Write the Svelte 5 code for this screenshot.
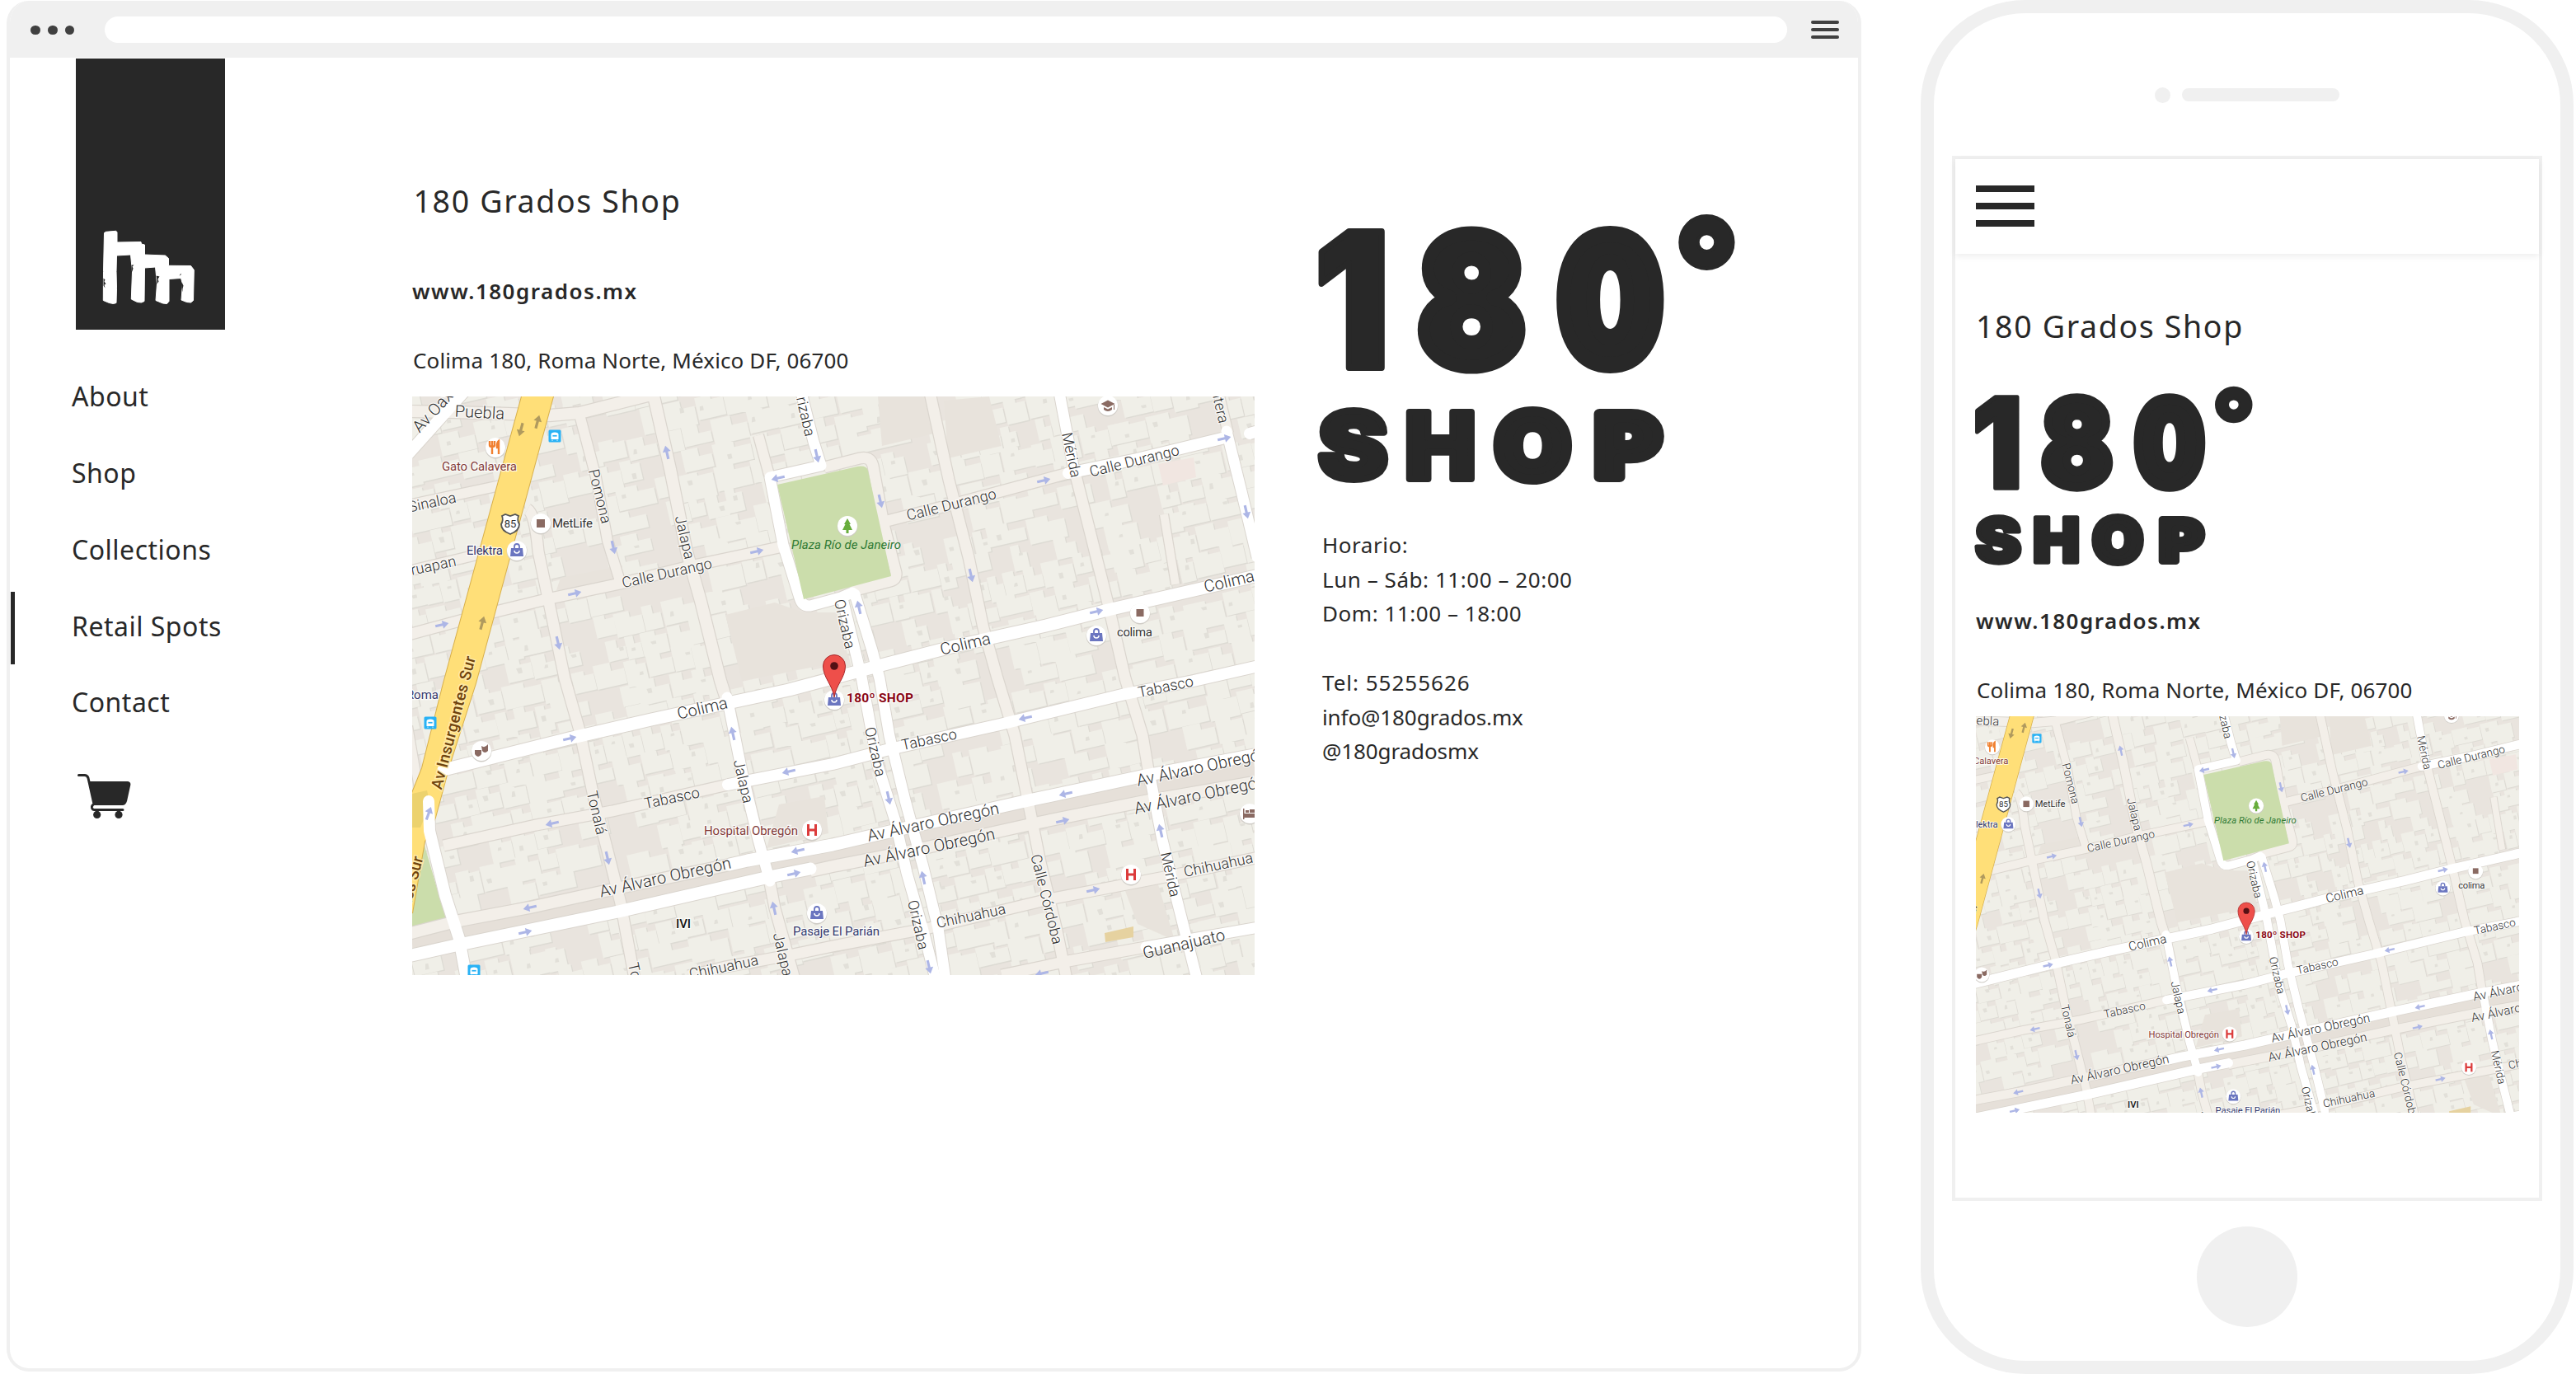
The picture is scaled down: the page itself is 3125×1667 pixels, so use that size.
<script>
  const nav = ['About', 'Shop', 'Collections', 'Retail Spots', 'Contact'];
  const active = 'Retail Spots';

  // Wordmark glyphs: target box [x0, x1, y0, y1] and the ink box of the face, in em.
  const wordmark = [
    { ch: '1', box: [1597, 1680, 277, 449.5], ink: [0.031, 0.406, 0.727, 0], s: 8 },
    { ch: '8', box: [1720, 1852, 274, 453.5], ink: [0.035, 0.652, 0.738, -0.011], s: 17 },
    { ch: '0', box: [1888.5, 2020, 274, 453.5], ink: [0.035, 0.685, 0.738, -0.011], s: 20 },
    { ch: '°', box: [2034.5, 2104.5, 258.5, 327.5], ink: [0.04, 0.413, 0.745, 0.372], s: 4 },
    { ch: 'S', box: [1598, 1684, 494.5, 586.5], ink: [0.025, 0.635, 0.738, -0.011], s: 8 },
    { ch: 'H', box: [1706, 1788.5, 496, 585], ink: [0.05, 0.7, 0.727, 0], s: 8 },
    { ch: 'O', box: [1811.5, 1907.5, 493, 588.5], ink: [0.035, 0.745, 0.738, -0.011], s: 12 },
    { ch: 'P', box: [1934, 2020, 496, 585], ink: [0.05, 0.64, 0.727, 0], s: 12 }
  ].map(({ ch, box, ink, s }) => {
    const [x0, x1, y0, y1] = box;
    const [l, r, t, b] = ink;
    const size = (y1 - y0 - s) / (t - b);
    const sx = (x1 - x0) / ((r - l) * size + s);
    const x = x0 + (s / 2 - l * size) * sx;
    const y = y1 - s / 2 + b * size;
    return { ch, size, s, m: `translate(${x.toFixed(2)} ${y.toFixed(2)}) scale(${sx.toFixed(4)} 1)` };
  });

  // Buildings on a grid turned by the street angle.
  let seed = 11;
  const rnd = () => ((seed = (seed * 16807) % 2147483647) / 2147483647);
  let houses = '';
  let yards = '';
  for (let gy = -40; gy < 980; gy += 29) {
    for (let gx = -220; gx < 1060; ) {
      const w = 18 + rnd() * 34;
      if (rnd() > 0.14) {
        const y = gy + rnd() * 6;
        const h = 24 + rnd() * 9;
        const n = 3 + rnd() * 9;
        const x = gx + rnd() * 2;
        houses += `M${x.toFixed(1)} ${y.toFixed(1)}h${(w * 0.55).toFixed(1)}v${n.toFixed(1)}h${(w * 0.42).toFixed(1)}v${(h - n).toFixed(1)}h${(-w * 0.97).toFixed(1)}z`;
        if (rnd() > 0.5) yards += `M${(x + 4 + rnd() * w * 0.5).toFixed(1)} ${(y + 7 + rnd() * 10).toFixed(1)}h${(3 + rnd() * 4).toFixed(1)}v${(3 + rnd() * 4).toFixed(1)}h-5z`;
      }
      gx += w;
    }
  }

  const minor = [
    [14, 'M-5 18L50 19 117 21 167 23 203 20 290-2'],
    [12, 'M-5 132L107 108'],
    [12, 'M-5 212L83 191'],
    [13, 'M-5 289L73 268 163 246 257 226 337 206 450 182'],
    [13, 'M572 152L655 131 796 93'],
    [12, 'M203 22L223 98 237 175 252 224'],
    [13, 'M140 137Q149 142 153 188L167 255 185 342 203 405 220 485 237 551 253 615 270 707'],
    [14, 'M292-5L313 88 333 188 350 248 374 345 382 370'],
    [13, 'M432 580L440 621 464 707'],
    [12, 'M420 47L433 95'],
    [13, 'M500 86L543 75Q556 72 559 84L572 155 587 214Q588 222 580 224L534 236'],
    [13, 'M628-5L651 101 675 195 693 281 710 342 731 411 748 495 762 565 782 648 794 707'],
    [13, 'M803 88L820 155 844 251 865 342 886 411 896 471'],
    [12, 'M978-5L990 45'],
    [13, 'M38 545L150 520 243 503 383 471'],
    [14, 'M-5 652L57 636 143 620 257 595 390 567'],
    [14, 'M483 576L510 570 607 551 755 518 889 491 1027 467'],
    [13, 'M335 703L380 692 457 678 510 667 627 645 772 610 913 583 1027 559'],
    [13, 'M715 702L796 685 890 668'],
    [10, 'M912 143L926 228'],
    [10, 'M-5 400L8 475']
  ];
  const major = [
    [14, 'M-5 70L64-7'],
    [15, 'M38 453L90 440 190 415 290 392 457 356 569 326 658 303 769 278 844 259 927 240 1027 217'],
    [14, 'M383 471L510 446 579 428 713 398 865 361 948 345 1027 327'],
    [15, 'M385 568L407 563 510 544 579 528 748 490 889 460 1027 434'],
    [15, 'M-5 679L57 665 250 625 433 583 483 573'],
    [14, 'M796 93L879 76 982 51M1016 45L1027 42'],
    [13, 'M785-5L803 90'],
    [13, 'M896 466L910 538 927 608 952 707'],
    [13, 'M988 42L1006 115 1025 195'],
    [13, 'M890 668L930 661 1027 644'],
    [13, 'M382 365L400 455 420 538 434 588'],
    [13, 'M472-5L487 55 496 84 434 98 450 180 470 244Q473 255 483 254L520 244 534 238'],
    [13, 'M522 245L545 340 565 448 586 515 600 578 620 648 635 707'],
    [13, 'M537 240L558 308 567 342 579 412 598 490 620 571 638 645 647 707'],
    [14, 'M20 491L21 527 40 605 57 658 66 707']
  ];

  const E = -13, W = 167, N = -103, S = 77;
  const arrows = [
    [197, 239, E], [418, 188, E], [36, 277, E], [309, 68, N], [244, 183, S], [177, 299, S], [491, 72, S], [444, 99, W],
    [766, 102, E], [985, 51, E], [1012, 140, S], [568, 127, S], [678, 217, S], [830, 261, E], [542, 256, N],
    [191, 415, E], [389, 409, N], [457, 455, W], [170, 518, W], [237, 560, S], [468, 551, W], [463, 579, E],
    [143, 620, W], [137, 650, E], [439, 621, N], [20, 506, -70],
    [744, 390, W], [578, 487, S], [793, 482, W], [789, 515, E], [620, 584, N], [826, 599, E], [908, 527, N], [627, 692, S], [764, 700, W]
  ];
  const avenueArrows = [[132, 40, 105], [152, 31, -75], [85, 275, -75]];

  // Street names: text, x, y, angle, size, anchor
  const streets = [
    ['Av Oaxaca', 4, 40, -47, 20, 'start'], ['Puebla', 82, 19, 3, 20],
    ['Sinaloa', 53, 122, -12, 18, 'end'], ['Uruapan', 53, 199, -12, 18, 'end'],
    ['Pomona', 228, 121, 76, 18], ['Jalapa', 331, 171, 77, 18], ['Calle Durango', 309, 214, -12.5, 18],
    ['Orizaba', 483, 48, 77, 18, 'end'], ['Frontera', 985, 32, 77, 18, 'end'], ['Mérida', 800, 71, 78, 18],
    ['Calle Durango', 654, 131, -14, 18], ['Calle Durango', 876, 78, -14, 18],
    ['Colima', 671, 300, -13, 20], ['Colima', 991, 224, -13, 20], ['Colima', 352, 378, -13, 20],
    ['Orizaba', 525, 276, 77, 18], ['Orizaba', 562, 431, 77, 18], ['Orizaba', 614, 641, 77, 18],
    ['Tabasco', 315, 487, -12, 18], ['Tabasco', 627, 416, -12, 18], ['Tabasco', 914, 352, -12, 18],
    ['Tonalá', 224, 505, 77, 18], ['Jalapa', 402, 467, 77, 18], ['Jalapa', 450, 677, 77, 18],
    ['Tonalá', 268, 687, 77, 18, 'start'],
    ['Av Álvaro Obregón', 307, 583, -12.5, 20], ['Av Álvaro Obregón', 632, 516, -12, 20], ['Av Álvaro Obregón', 627, 547, -12, 20],
    ['Av Álvaro Obregón', 879, 466, -12, 20, 'start'], ['Av Álvaro Obregón', 876, 500, -12, 20, 'start'],
    ['Chihuahua', 378, 692, -12, 18], ['Chihuahua', 678, 630, -12, 18], ['Chihuahua', 978, 568, -12, 18],
    ['Calle Córdoba', 770, 610, 76, 18], ['Mérida', 920, 580, 77, 18], ['Guanajuato', 936, 664, -13, 20]
  ];
  const dots = [[101, 62], [156, 154], [127, 187], [844, 11], [528, 157], [883, 263], [830, 290], [84, 430], [485, 526], [491, 627], [872, 580], [1016, 506], [512, 368]];
  const bags = [[127, 187], [830, 290], [491, 627], [512, 368]];
  const buses = [[173, 48], [22, 396], [75, 697]];
</script>

{#snippet shopLogo()}
  <svg class="wordmark" viewBox="1595 255 515 335" role="img" aria-label="180° Shop">
    {#each wordmark as g}
      <text transform={g.m} font-size={g.size} stroke-width={g.s}>{g.ch}</text>
    {/each}
  </svg>
{/snippet}

{#snippet cityMap(view)}
  <svg class="map" viewBox={view} preserveAspectRatio="none">
    <rect class="ground" width="1022" height="702" />
    <g transform="rotate(-13)">
      <path class="shade" d={houses} transform="translate(1.3 1.5)" />
      <path class="house" d={houses} />
      <path class="yard" d={yards} />
    </g>
    <path class="open" d="M380 265L440 250 475 262 515 262 530 320 400 345Z M175 235L250 228 255 205 180 220Z M565 0L625 0 633 45 570 60Z M645 5L700 0 715 60 650 75Z M445 495L500 485 505 530 430 548Z M865 600L905 592 925 660 880 640Z" />
    <path class="plaza" d="M905 82L948 74 951 98 911 108Z" />
    <path class="gold" d="M840 651L875 643 875 656 841 662Z" />
    <path class="green" d="M15 545L42 637 0 645 0 600Z" />
    <path class="median" d="M0 664L57 650 250 610 420 574 600 540 755 504 889 475 1022 450" />
    {#each minor as [w, d]}<path class="edge" {d} stroke-width={w + 2.4} />{/each}
    {#each major as [w, d]}<path class="edge" {d} stroke-width={w + 2} />{/each}
    {#each minor as [w, d]}<path class="minor" {d} stroke-width={w} />{/each}
    <path class="avenue-edge" d="M133 0L171 0 77 348 45 448 28 511 15 540 0 627M133 0L38 348 12 451 0 481" />
    <path class="avenue" d="M133 0L171 0 77 348 45 448 28 511 15 540 0 627 0 481 12 451 38 348Z" />
    <path class="avenue-dark" d="M0 482L18 478 22 495 10 523 0 523Z" />
    {#each major as [w, d]}<path class="major" {d} stroke-width={w} />{/each}
    <path class="green" d="M443 107L540 85Q551 83 553 90L581 218 475 246Z" />
    {#each arrows as [x, y, a]}
      <path class="arrow" d="M-8-1.600H1V-5L8.500 0L1 5V1.600H-8Z" transform="translate({x} {y}) rotate({a})" />
    {/each}
    {#each avenueArrows as [x, y, a]}
      <path class="arrow tan" d="M-8-1.600H1V-5L8.500 0L1 5V1.600H-8Z" transform="translate({x} {y}) rotate({a})" />
    {/each}
    {#each streets as [name, x, y, a, size, anchor]}
      <text class="street" dy=".35em" font-size={size} text-anchor={anchor ?? 'middle'} transform="translate({x} {y}) rotate({a})">{name}</text>
    {/each}
    <text class="avenue-name" dy=".35em" textLength="166" transform="translate(29 476) rotate(-75.5)">Av Insurgentes Sur</text>
    <text class="avenue-name" dy=".35em" text-anchor="end" transform="translate(7 558) rotate(-75.5)">Av Insurgentes Sur</text>

    {#each dots as [x, y]}
      <circle class="halo" cx={x} cy={y + 1} r="12.400" />
      <circle class="dot" cx={x} cy={y} r="12" />
    {/each}
    {#each bags as [x, y]}
      <g transform="translate({x} {y})">
        <path class="bag" d="M-7-3H7L8 7H-8Z" />
        <path class="bag-handle" d="M-3-3V-5A3 3 0 0 1 3-5V-3" />
        <path class="bag-smile" d="M-3 0A3 3 0 0 0 3 0" />
      </g>
    {/each}
    {#each buses as [x, y]}
      <g transform="translate({x} {y})">
        <rect class="bus" x="-7.500" y="-7.500" width="15" height="15" rx="1.500" />
        <path class="bus-body" d="M-4.500 4V-2Q-4.500-4.500 0-4.500T4.500-2V4Z" />
        <path class="bus-glass" d="M-3-1.500H3V1H-3ZM-3 4.500V6M3 4.500V6" />
      </g>
    {/each}
    <path class="fork" d="M97 54V70M94 54V59Q94 61 97 61T100 59V54M105 70V54Q102.500 56 103 62H105" />
    <rect class="brown" x="151" y="149" width="10" height="10" />
    <rect class="brown" x="878.500" y="258" width="9" height="9" />
    <path class="shield" d="M109 145L113 143 119 145 125 143 129 145Q127 150 130 155 130 163 119 167 108 163 108 155 111 150 109 145Z" />
    <text class="poi shield-no" x="119" y="158.500" text-anchor="middle" font-size="12.500">85</text>
    <path class="brown" d="M835.500 9L844 4.500 852.500 9 844 13.500ZM839 13V16Q844 20 849 16V13L844 15.500ZM851 10H852V16H851Z" />
    <path class="tree" d="M528 148L532 155H530.500L534 162H529.500V166H526.500V162H522L525.500 155H524Z" />
    <path class="brown" d="M76 429H84V434Q80 440 76 434ZM84 424Q88 427 92 422V430Q88 434 85 430Z" />
    <path class="brown" d="M1008 500H1009.500V506H1022V511H1009.500V513H1008ZM1011 502H1015V505H1011ZM1016 501H1022V505H1016Z" />
    <path class="cross" d="M480.500 519V533M489.500 519V533M480.500 526H489.500M867.500 573V587M876.500 573V587M867.500 580H876.500" />

    <text class="poi food" x="36" y="90" textLength="91">Gato Calavera</text>
    <text class="poi" x="170" y="159" textLength="49">MetLife</text>
    <text class="poi navy" x="66" y="192" textLength="44">Elektra</text>
    <text class="poi navy" x="32" y="367" text-anchor="end">Roma</text>
    <text class="poi park" x="460" y="185" textLength="133">Plaza Río de Janeiro</text>
    <text class="poi" x="855" y="291" textLength="43">colima</text>
    <text class="poi food" x="354" y="532" textLength="114">Hospital Obregón</text>
    <text class="poi black" x="329" y="645" text-anchor="middle">IVI</text>
    <text class="poi navy" x="462" y="654" textLength="105">Pasaje El Parián</text>
    <text class="poi spot" x="527" y="371" textLength="81">180º SHOP</text>

    <path class="pin" d="M512 365C510 350 498.500 341 498.500 327A13.500 13.500 0 0 1 525.500 327C525.500 341 514 350 512 365Z" />
    <circle class="pin-eye" cx="512" cy="327" r="4.800" />
  </svg>
{/snippet}

<div class="stage">
  <section class="browser">
    <header class="bar">
      <div class="dots"><i></i><i></i><i></i></div>
      <div class="address"></div>
      <div class="burger small"><i></i><i></i><i></i></div>
    </header>
    <div class="page">
      <aside>
        <svg class="brand" viewBox="91.500 71.500 181 329" role="img" aria-label="hm">
          <rect x="91.500" y="71.500" width="181" height="329" fill="#282828" />
          <path
            fill="#fff" stroke="#fff" stroke-width="1" stroke-linejoin="round"
            d="M126 283L128 281.800 140 280.800 141.500 282V294.500L170.500 294 171 296.500 175 297.500V309.500L200 310.500 204 314V322.800L231 323 234.800 328 234 365 231 367.500 226 367 219.500 364.500 221 345 219 338 204.500 339V366L202 369 197 368.500 188.500 365 190 345 188 324.500 175 325.500 174.500 366 171 367.500 166 367 158.800 363.500 160 330 158 309.500 141 310.500 140.500 330 141 350 140.500 368 137 369 132 368 124.800 365 125 330Z" />
          <path fill="#282828" d="M125 338l2 2-1 2 2 3-2 1 1 4-2-3zM159 322l3 0-2 2 1 2-1 4-1-3zM189 335l4 1-2 3 1 3-2 3 0-4zM219 332l-2 3 2-1zM220 343l2 4-1 4 0 4-1-5z" />
        </svg>
        <ul>
          {#each nav as item}
            <li class:active={item === active}><span>{item}</span></li>
          {/each}
        </ul>
        <svg class="cart" viewBox="93 939 67 57">
          <path fill="none" stroke="#282828" stroke-width="3" stroke-linecap="round" stroke-linejoin="round" d="M95.500 941.500H102.500Q106 941.500 107 945L114 976.500Q111 978 111.500 981 112 983.500 114.500 983.500H149" />
          <path fill="#282828" d="M107.500 949H155Q159 949.500 158.300 953.500L154 973Q152.500 978 148.500 978H114Z" />
          <circle fill="#282828" cx="117.700" cy="989.400" r="4.600" />
          <circle fill="#282828" cx="144" cy="989.400" r="4.600" />
        </svg>
      </aside>
      <main>
        <h1>180 Grados Shop</h1>
        <p class="site">www.180grados.mx</p>
        <p class="place">Colima 180, Roma Norte, México DF, 06700</p>
        <div class="map-box">{@render cityMap('0 0 1022 702')}</div>
      </main>
      <div class="info">
        {@render shopLogo()}
        <div class="lines">
          <p>Horario:</p>
          <p>Lun – Sáb: 11:00 – 20:00</p>
          <p>Dom: 11:00 – 18:00</p>
          <p class="gap">Tel: 55255626</p>
          <p class="tight">info@180grados.mx</p>
          <p class="tight">@180gradosmx</p>
        </div>
      </div>
    </div>
  </section>

  <section class="phone">
    <div class="speaker"><i></i><b></b></div>
    <div class="screen">
      <div class="top"><div class="burger large"><i></i><i></i><i></i></div></div>
      <div class="body">
        <h1>180 Grados Shop</h1>
        {@render shopLogo()}
        <p class="site">www.180grados.mx</p>
        <p class="place">Colima 180, Roma Norte, México DF, 06700</p>
        <div class="map-box">{@render cityMap('74.400 12.300 879 641')}</div>
      </div>
    </div>
    <div class="home"></div>
  </section>
</div>

<style>
  :global(body) { background: #fff; overflow: hidden; }
  .stage {
    display: flex;
    align-items: flex-start;
    width: 3125px;
    height: 1667px;
    overflow: hidden;
    color: #282828;
    font-family: 'Noto Sans', 'Open Sans', sans-serif;
  }
  h1, p, ul { margin: 0; padding: 0; font-weight: 400; }
  p, h1, li { white-space: nowrap; }

  .browser {
    box-sizing: border-box;
    flex: none;
    width: 2250px;
    height: 1663px;
    margin: 1px 0 0 8px;
    border: 4px solid #f0f0f0;
    border-top: 0;
    border-radius: 27px;
    overflow: hidden;
    display: flex;
    flex-direction: column;
  }
  .bar {
    flex: none;
    height: 69px;
    display: flex;
    align-items: center;
    background: #f0f0f0;
  }
  .dots { display: flex; gap: 9px; margin-left: 25px; padding-top: 2px; }
  .dots i { width: 11.8px; height: 11.8px; border-radius: 50%; background: #404040; }
  .address { width: 2041px; height: 32px; margin-left: 37px; border-radius: 16px; background: #fff; }
  .burger { display: flex; flex-direction: column; }
  .burger i { display: block; background: #404040; }
  .small { gap: 4.5px; width: 33.5px; margin-left: 29px; padding-top: 1px; }
  .small i { height: 4.5px; border-radius: 2px; }

  .page { display: flex; flex: 1; }
  aside { width: 488px; padding-top: 1px; box-sizing: border-box; }
  .brand { display: block; width: 181px; height: 329px; margin-left: 79.5px; }
  ul { list-style: none; margin-top: 37px; }
  li {
    display: flex;
    align-items: center;
    height: 92.75px;
    font-size: 32px;
    line-height: 44px;
    letter-spacing: 0.5px;
  }
  li::before { content: ''; width: 5px; height: 88px; margin: 0 69px 0 1px; }
  li.active::before { background: #282828; }
  li span { padding-bottom: 4px; }
  .cart { display: block; width: 67px; height: 57px; margin: 37px 0 0 81px; }

  main { width: 1022px; padding-top: 144px; }
  h1 { padding-left: 1.5px; font-size: 37.5px; line-height: 60px; letter-spacing: 1.65px; }
  .site { font-size: 26px; line-height: 40px; font-weight: 600; letter-spacing: 1.5px; }
  .place { padding-left: 1px; font-size: 26px; line-height: 40px; letter-spacing: 0.13px; }
  main .site { margin-top: 59px; }
  main .place { margin-top: 44px; }
  main .map-box { width: 1022px; height: 702px; margin-top: 24px; }

  .info { margin-left: 73px; padding-top: 185px; }
  .info .wordmark { width: 515px; height: 335px; }
  .lines { margin: 51px 0 0 9px; font-size: 26px; line-height: 41.7px; letter-spacing: 0.55px; }
  .gap { margin-top: 41.7px; letter-spacing: 1px; }
  .tight { letter-spacing: -0.1px; }

  .wordmark { display: block; fill: #282828; stroke: #282828; stroke-linejoin: round; font-family: Inter, sans-serif; font-weight: 900; }

  .phone {
    box-sizing: border-box;
    flex: none;
    width: 792px;
    height: 1667px;
    margin-left: 72px;
    border: 16px solid #f0f0f0;
    border-radius: 127px;
    display: flex;
    flex-direction: column;
    align-items: center;
  }
  .speaker { display: flex; align-items: center; gap: 13.5px; margin-top: 89.5px; width: 224px; }
  .speaker i { width: 19px; height: 19px; border-radius: 50%; background: #f0f0f0; }
  .speaker b { width: 191px; height: 16px; border-radius: 8px; background: #f0f0f0; }
  .screen { box-sizing: border-box; width: 716px; height: 1268px; margin-top: 64px; border: 4.5px solid #f0f0f0; }
  .top { height: 115px; display: flex; align-items: center; box-shadow: 0 3px 8px rgba(0, 0, 0, 0.07); }
  .large { width: 70.5px; gap: 13px; margin-left: 25px; }
  .large i { height: 8px; background: #282828; }
  .body { padding: 58px 0 0 25px; }
  .body h1 { padding-left: 0; }
  .body .wordmark { width: 343.3px; height: 223.3px; margin: 39.5px 0 0 -4.5px; }
  .body .site { margin-top: 45px; }
  .body .place { margin-top: 44px; }
  .body .map-box { width: 659px; height: 481px; margin-top: 11.4px; }
  .home { width: 122px; height: 122px; margin-top: 31.5px; border-radius: 50%; background: #f0f0f0; }

  .map { display: block; width: 100%; height: 100%; overflow: hidden; font-family: Roboto, sans-serif; }
  .ground { fill: #e9e4de; }
  .house { fill: #f0efe8; }
  .shade { fill: #dddbd4; }
  .yard { fill: #e2e0d9; }
  .open { fill: #e8e3dc; }
  .plaza { fill: #f1e6e1; }
  .gold { fill: #e6d2a0; }
  .green { fill: #cbddab; }
  .median { fill: none; stroke: #e6e0d9; stroke-width: 20; }
  .edge { fill: none; stroke: #dad5ce; }
  .minor { fill: none; stroke: #f3efe9; }
  .major { fill: none; stroke: #fff; stroke-linecap: round; stroke-linejoin: round; }
  .avenue { fill: #ffdf78; }
  .avenue-edge { fill: none; stroke: #d8b04c; stroke-width: 2; }
  .avenue-dark { fill: #ecd26e; }
  .arrow { fill: #adb6e6; }
  .tan { fill: #b09a5e; }
  .street { fill: #2c2c2c; font-weight: 300; letter-spacing: 0.1px; stroke: #fff; stroke-opacity: 0.7; stroke-width: 2.5; paint-order: stroke; }
  .avenue-name { font-size: 19px; font-weight: 500; fill: #6f430d; stroke: #ffe9a6; stroke-width: 3; paint-order: stroke; }
  .halo { fill: #cfccc6; }
  .dot { fill: #fff; }
  .bag { fill: #6b76c0; }
  .bag-handle { fill: none; stroke: #6b76c0; stroke-width: 1.8; }
  .bag-smile { fill: none; stroke: #fff; stroke-width: 1.5; }
  .bus { fill: #29b2f5; }
  .bus-body { fill: #fff; }
  .bus-glass { fill: #29b2f5; stroke: #fff; stroke-width: 0.8; }
  .fork { fill: none; stroke: #f08030; stroke-width: 2.4; }
  .brown { fill: #8a6a62; }
  .shield { fill: #fff; stroke: #555; stroke-width: 1.8; }
  .tree { fill: #68ad3c; }
  .cross { fill: none; stroke: #dc3c3c; stroke-width: 3; }
  .poi { font-size: 15px; fill: #333; stroke: #fff; stroke-opacity: 0.8; stroke-width: 2.5; paint-order: stroke; }
  .shield-no { font-size: 13px; stroke: none; }
  .food { fill: #843c3a; }
  .navy { fill: #34396e; }
  .park { fill: #2f7a34; font-style: italic; stroke: none; }
  .black { fill: #111; font-weight: 500; }
  .spot { fill: #8a0614; font-weight: 700; font-size: 15.5px; }
  .pin { fill: #ee4f4a; stroke: #a8282a; stroke-width: 1; }
  .pin-eye { fill: #541014; }
</style>
